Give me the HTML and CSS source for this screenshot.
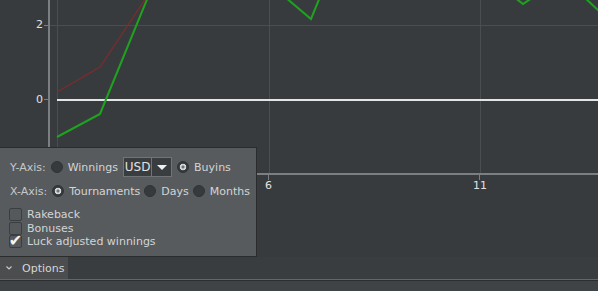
FILE: index.html
```html
<!DOCTYPE html>
<html lang="en">
<head>
  <meta charset="UTF-8">
  <title>Graph</title>
  <link rel="stylesheet" href="styles.css">
</head>
<body>

<div class="plot">
  <svg class="graph" width="598" height="257" viewBox="0 0 598 257">
    <!-- grid -->
    <g stroke="#4b4e51" stroke-width="1">
      <line x1="50" y1="25.5" x2="598" y2="25.5"/>
      <line x1="57.5" y1="0" x2="57.5" y2="174"/>
      <line x1="269.5" y1="0" x2="269.5" y2="174"/>
      <line x1="480.5" y1="0" x2="480.5" y2="174"/>
    </g>
    <!-- axes -->
    <line x1="49" y1="0" x2="49" y2="175" stroke="#7c7f82" stroke-width="2"/>
    <line x1="48" y1="174" x2="598" y2="174" stroke="#7c7f82" stroke-width="2"/>
    <g stroke="#7c7f82" stroke-width="1">
      <line x1="44" y1="25.5" x2="49" y2="25.5"/>
      <line x1="44" y1="99.5" x2="49" y2="99.5"/>
      <line x1="268.5" y1="174" x2="268.5" y2="180"/>
      <line x1="479.5" y1="174" x2="479.5" y2="180"/>
    </g>
    <line x1="57" y1="100" x2="598" y2="100" stroke="#e4e4e4" stroke-width="2"/>
    <!-- series -->
    <polyline points="57,92 100,67 146,-2" fill="none" stroke="#7a2d2d" stroke-width="1.3"/>
    <g fill="none" stroke="#1fa31f" stroke-width="2" stroke-linejoin="miter">
      <polyline points="57,137 100,114 148,-3"/>
      <polyline points="285,-3 311,19 320,-3"/>
      <polyline points="514,-3 523,4 532,-2"/>
      <polyline points="584,-3 600,12"/>
    </g>
    <!-- labels -->
    <g class="ticks" fill="#e2e2e2">
      <text x="43" y="28" text-anchor="end">2</text>
      <text x="43" y="103" text-anchor="end">0</text>
      <text x="268.5" y="189" text-anchor="middle">6</text>
      <text x="480" y="189" text-anchor="middle">11</text>
    </g>
  </svg>

  <div class="options-panel">
    <div class="opt-row">
      <span class="axis-label">Y-Axis:</span>
      <span class="radio"></span>
      <span class="opt-text">Winnings</span>
      <span class="combo">
        <span class="combo-value">USD</span>
        <span class="combo-arrow"></span>
      </span>
      <span class="radio checked"></span>
      <span class="opt-text">Buyins</span>
    </div>
    <div class="opt-row">
      <span class="axis-label">X-Axis:</span>
      <span class="radio checked"></span>
      <span class="opt-text">Tournaments</span>
      <span class="radio"></span>
      <span class="opt-text">Days</span>
      <span class="radio"></span>
      <span class="opt-text">Months</span>
    </div>
    <div class="checks">
      <div class="check-row"><span class="checkbox"></span>Rakeback</div>
      <div class="check-row"><span class="checkbox"></span>Bonuses</div>
      <div class="check-row"><span class="checkbox checked">&#10004;</span>Luck adjusted winnings</div>
    </div>
  </div>
</div>

<div class="tabbar">
  <div class="tab">
    <svg width="6" height="4" viewBox="0 0 6 4"><polyline points="0.5,0.5 3,3 5.5,0.5" fill="none" stroke="#c8c8c8" stroke-width="1.2"/></svg>
    <span>Options</span>
  </div>
</div>
<div class="statusbar"></div>

</body>
</html>
```

FILE: styles.css
```css
body {
  margin: 0;
  padding: 0;
  background-color: #383b3e;
  color: #d4d4d4;
  font-family: "DejaVu Sans", sans-serif;
  font-size: 11px;
  overflow: hidden;
}

.plot {
  position: relative;
  height: 257px;
}

.graph {
  display: block;
}

.ticks text {
  font-family: "DejaVu Sans", sans-serif;
  font-size: 11px;
}

.options-panel {
  position: absolute;
  left: 0;
  top: 147px;
  width: 247px;
  height: 99px;
  padding: 9px 0 0 9px;
  background-color: #575b5e;
  border: 1px solid #2a2c2e;
  border-left: none;
  white-space: nowrap;
}

.opt-row {
  display: flex;
  align-items: center;
  height: 20px;
  margin-bottom: 4px;
}

.opt-row > span {
  flex: none;
}

.axis-label {
  color: #c6c8ca;
  margin-left: 1px;
  margin-right: 5px;
}

.opt-text {
  margin-left: 5px;
  margin-right: 4px;
}

.radio {
  width: 12px;
  height: 12px;
  border-radius: 50%;
  background-color: #363a3d;
  box-sizing: border-box;
  border: 1px solid #303336;
}

.radio.checked {
  background: radial-gradient(circle, #6e7173 0 1.3px, #d6d6d6 1.8px 3px, #363a3d 3.6px);
}

.combo {
  display: flex;
  height: 20px;
  box-sizing: border-box;
  border: 1px solid #717477;
  background-color: #3a3d40;
  margin-left: 1px;
  margin-right: 5px;
}

.combo-value {
  width: 27px;
  line-height: 18px;
  text-align: center;
  color: #e2e2e2;
  border-right: 1px solid #717477;
  font-size: 12px;
}

.combo-arrow {
  width: 19px;
  display: flex;
  align-items: center;
  justify-content: center;
}

.combo-arrow::after {
  content: "";
  border-left: 5px solid transparent;
  border-right: 5px solid transparent;
  border-top: 5px solid #f0f0f0;
}

.checks {
  margin-top: 7px;
}

.check-row {
  display: flex;
  align-items: center;
  height: 13.5px;
}

.checkbox {
  width: 13px;
  height: 13px;
  box-sizing: border-box;
  border: 1px solid #3b3e41;
  border-radius: 2px;
  background-color: #55595c;
  margin-right: 5px;
  flex: none;
}

.checkbox.checked {
  color: #f4f4f4;
  font-size: 16px;
  line-height: 9px;
  display: flex;
  justify-content: center;
}

.tabbar {
  height: 22px;
  border-bottom: 1px solid #63676a;
  box-shadow: 0 1px 0 #2b2d2f;
  background-color: #3a3d40;
  display: flex;
}

.tab {
  width: 68px;
  display: flex;
  align-items: center;
  background-color: #4c4d4e;
  color: #d6d6d6;
}

.tab svg {
  margin-left: 6px;
  margin-right: 10px;
}

.statusbar {
  margin-top: 1px;
  height: 10px;
  background-color: #404346;
}
```
